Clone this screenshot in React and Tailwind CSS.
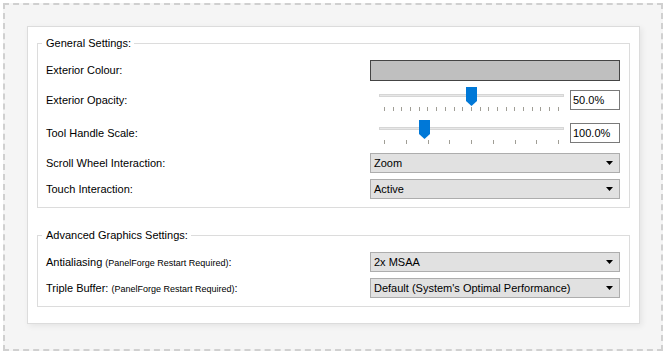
const font = { fontFamily: '"Liberation Sans", Arial, sans-serif' };

const Arrow = () => (
  <svg width="7" height="4" viewBox="0 0 7 4" className="shrink-0">
    <polygon points="0,0 7,0 3.5,4" fill="#000" />
  </svg>
);

const Thumb = () => (
  <svg width="11" height="19" viewBox="0 0 11 19">
    <polygon points="0,0 11,0 11,14 5.5,19 0,14" fill="#0078d7" />
  </svg>
);

function Combo({ value }) {
  return (
    <div className="w-[250px] h-[20px] bg-[#e1e1e1] border border-[#adadad] flex items-center justify-between pl-[3px] pr-[6px] text-[11px] text-black">
      <span>{value}</span>
      <Arrow />
    </div>
  );
}

function Slider({ value, ticks, text }) {
  return (
    <div className="w-[250px] flex items-start">
      <div className="relative ml-[9px] w-[185px] h-[23px]">
        <div className="absolute left-0 right-0 top-[7px] h-[3px] bg-[#e7e7e7] border border-[#d6d6d6]" />
        <div className="absolute top-0" style={{ left: `${value * 174}px` }}>
          <Thumb />
        </div>
        <div className="absolute left-[5px] right-[5px] top-[20px] h-[4px] flex justify-between">
          {Array.from({ length: ticks }).map((_, i) => (
            <div key={i} className="w-px h-[4px] bg-[#a09e96]" />
          ))}
        </div>
      </div>
      <div className="ml-[6px] mt-[3px] w-[50px] h-[20px] border border-[#7a7a7a] bg-white pl-[2px] flex items-center text-[11px] text-black">
        {text}
      </div>
    </div>
  );
}

function Group({ title, children, className = "" }) {
  return (
    <fieldset className={"border border-[#dcdcdc] pl-[8px] pr-[9px] pb-[8px] " + className}>
      <legend className="-ml-[4px] pl-[4px] pr-[3px] text-[11px] leading-[14px] text-black">{title}</legend>
      <div className="pt-[10px]">{children}</div>
    </fieldset>
  );
}

const Small = ({ children }) => <span className="text-[9px]">{children}</span>;

export default function App() {
  return (
    <div className="bg-white w-[666px] h-[355px] pt-[3px] pl-[3px]" style={font}>
      <div className="w-[660px] h-[348px] border-2 border-dashed border-[#d0d0d0] bg-[#f5f5f5] pl-[22px] pt-[21px]">
        <div className="w-[613px] bg-white border border-[#dcdcdc] shadow-[2px_2px_6px_rgba(0,0,0,0.07)] px-[9px] pt-[9px] pb-[16px]">
          <Group title="General Settings:">
            <div className="flex items-center justify-between h-[21px]">
              <span className="text-[11px] text-black">Exterior Colour:</span>
              <div className="w-[250px] h-[21px] border border-[#444] bg-[#bfbfbf]" />
            </div>
            <div className="flex items-start justify-between mt-[6px]">
              <span className="text-[11px] leading-[20px] mt-[3px] text-black">Exterior Opacity:</span>
              <Slider value={0.5} ticks={21} text="50.0%" />
            </div>
            <div className="flex items-start justify-between mt-[10px]">
              <span className="text-[11px] leading-[20px] mt-[3px] text-black">Tool Handle Scale:</span>
              <Slider value={0.23} ticks={9} text="100.0%" />
            </div>
            <div className="flex items-center justify-between mt-[10px]">
              <span className="text-[11px] text-black">Scroll Wheel Interaction:</span>
              <Combo value="Zoom" />
            </div>
            <div className="flex items-center justify-between mt-[6px]">
              <span className="text-[11px] text-black">Touch Interaction:</span>
              <Combo value="Active" />
            </div>
          </Group>
          <Group title="Advanced Graphics Settings:" className="mt-[20px]">
            <div className="flex items-center justify-between">
              <span className="text-[11px] text-black">
                Antialiasing <Small>(PanelForge Restart Required)</Small>:
              </span>
              <Combo value="2x MSAA" />
            </div>
            <div className="flex items-center justify-between mt-[6px]">
              <span className="text-[11px] text-black">
                Triple Buffer: <Small>(PanelForge Restart Required)</Small>:
              </span>
              <Combo value="Default (System's Optimal Performance)" />
            </div>
          </Group>
        </div>
      </div>
    </div>
  );
}
